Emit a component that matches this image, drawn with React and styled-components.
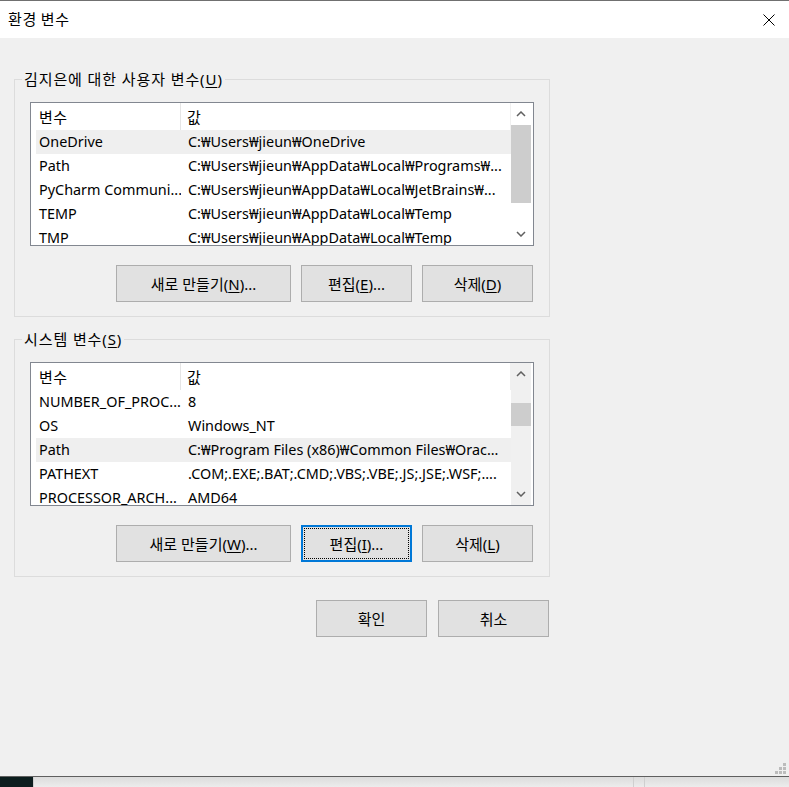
import React from "react";
import styled, { createGlobalStyle } from "styled-components";

//setup styled
const GlobalStyle = createGlobalStyle`
  html, body {
    margin: 0;
    padding: 0;
    background: #f0f0f0;
  }
  body {
    font-family: "Noto Sans", "Noto Sans CJK KR", sans-serif;
    font-size: 15px;
    color: #000000;
  }
`;

const Window = styled.div`
  width: 789px;
  height: 787px;
  display: flex;
  flex-direction: column;
  overflow: hidden;
`;

const TitleBar = styled.div`
  height: 38px;
  box-sizing: border-box;
  border-top: 1px solid #707070;
  background: #ffffff;
  display: flex;
  align-items: center;
  justify-content: space-between;
  padding: 0 14px 0 8px;
  flex-shrink: 0;
`;

const Title = styled.div`
  font-family: "Noto Sans CJK KR", sans-serif;
  font-size: 15px;
  line-height: 20px;
  letter-spacing: 0.6px;
  margin-top: -1px;
`;

const Body = styled.div`
  position: relative;
  height: 739px;
  box-sizing: border-box;
  border-bottom: 1px solid #5f5f5f;
  background: #f0f0f0;
  padding: 31px 0 0 14px;
  display: flex;
  flex-direction: column;
  align-items: flex-start;
`;

const Group = styled.fieldset`
  width: 536px;
  box-sizing: border-box;
  margin: ${props => (props.$first ? "0" : "12px 0 0 0")};
  padding: 13px 15px 14px 15px;
  border: 1px solid #dcdcdc;
  min-width: 0;
`;

const Legend = styled.legend`
  margin-left: -8px;
  padding: 0 2px;
  line-height: 20px;
  font-size: 15px;
  letter-spacing: 0.9px;
`;

const Key = styled.span`
  text-decoration: underline;
  text-underline-offset: 2px;
`;

const List = styled.div`
  height: 144px;
  box-sizing: border-box;
  border: 1px solid #828790;
  background: #ffffff;
  display: flex;
  padding-right: 1px;
  overflow: hidden;
`;

const ListBody = styled.div`
  width: 480px;
  display: flex;
  flex-direction: column;
  overflow: hidden;
`;

const HeaderRow = styled.div`
  height: 27px;
  flex-shrink: 0;
  display: flex;
  align-items: center;
  border-right: 1px solid #f0f0f0;
`;

const HeaderCell = styled.div`
  height: 100%;
  box-sizing: border-box;
  display: flex;
  align-items: center;
  width: ${props => props.$width || "auto"};
  flex: ${props => (props.$width ? "none" : "1")};
  padding-left: ${props => props.$pad};
  border-right: ${props => (props.$divider ? "1px solid #e5e5e5" : "none")};
  font-family: "Noto Sans CJK KR", sans-serif;
  letter-spacing: 0.5px;
`;

const Row = styled.div`
  height: 24px;
  flex-shrink: 0;
  margin-left: 5px;
  display: flex;
  align-items: center;
  background: ${props => (props.$active ? "#efefef" : "transparent")};
  white-space: nowrap;
`;

const Cell = styled.div`
  width: ${props => props.$width || "auto"};
  flex: ${props => (props.$width ? "none" : "1")};
  box-sizing: border-box;
  padding-left: ${props => props.$pad};
  overflow: hidden;
  font-size: 14.4px;
  line-height: 24px;
`;

const ScrollBar = styled.div`
  width: 20px;
  flex-shrink: 0;
  display: flex;
  flex-direction: column;
  background: ${props => props.$track};
`;

const Arrow = styled.div`
  height: ${props => props.$h}px;
  flex-shrink: 0;
  display: flex;
  align-items: center;
  justify-content: center;
`;

const Track = styled.div`
  flex: 1;
`;

const Thumb = styled.div`
  margin-top: ${props => props.$top}px;
  height: ${props => props.$size}px;
  background: #cdcdcd;
`;

const ButtonRow = styled.div`
  display: flex;
  justify-content: flex-end;
  gap: 10px;
  margin-top: 19px;
  padding-right: 1px;
`;

const Button = styled.div`
  width: ${props => props.$width || "111px"};
  height: 37px;
  box-sizing: border-box;
  background: #e1e1e1;
  border: ${props => (props.$focus ? "2px solid #0078d7" : "1px solid #adadad")};
  display: flex;
  align-items: center;
  justify-content: center;
  padding: ${props => (props.$focus ? "1px" : "2px")};
  font-size: 15px;
  line-height: 20px;
`;

const FocusRing = styled.div`
  width: 100%;
  height: 100%;
  box-sizing: border-box;
  border: 1px dotted #000000;
  display: flex;
  align-items: center;
  justify-content: center;
`;

const Footer = styled.div`
  width: 536px;
  display: flex;
  justify-content: flex-end;
  gap: 11px;
  margin-top: 23px;
  padding-right: 1px;
  box-sizing: border-box;
`;

const Grip = styled.svg`
  position: absolute;
  right: 2px;
  bottom: 1px;
`;

const Taskbar = styled.div`
  height: 10px;
  flex-shrink: 0;
  display: flex;
`;

const TaskDark = styled.div`
  width: 33px;
  background: #0c1d1e;
`;

const TaskPanel = styled.div`
  width: ${props => props.$width}px;
  box-sizing: border-box;
  border-left: 1px solid #cfcfcf;
  background: linear-gradient(#dcdcdc, #ececec);
  flex: ${props => (props.$grow ? "1" : "none")};
`;

const userRows = [
  ["OneDrive", "C:₩Users₩jieun₩OneDrive", true],
  ["Path", "C:₩Users₩jieun₩AppData₩Local₩Programs₩..."],
  ["PyCharm Communi...", "C:₩Users₩jieun₩AppData₩Local₩JetBrains₩..."],
  ["TEMP", "C:₩Users₩jieun₩AppData₩Local₩Temp"],
  ["TMP", "C:₩Users₩jieun₩AppData₩Local₩Temp"]
];

const systemRows = [
  ["NUMBER_OF_PROC...", "8"],
  ["OS", "Windows_NT"],
  ["Path", "C:₩Program Files (x86)₩Common Files₩Orac...", true],
  ["PATHEXT", ".COM;.EXE;.BAT;.CMD;.VBS;.VBE;.JS;.JSE;.WSF;...."],
  ["PROCESSOR_ARCH...", "AMD64"]
];

const Chevron = ({ down }) => (
  <svg width="10" height="6" viewBox="0 0 10 6">
    <path
      d={down ? "M1 1 L5 5 L9 1" : "M1 5 L5 1 L9 5"}
      fill="none"
      stroke="#606060"
      strokeWidth="1.5"
    />
  </svg>
);

const VarList = ({ rows, track, thumbTop, thumbSize }) => (
  <List>
    <ListBody>
      <HeaderRow>
        <HeaderCell $width="150px" $pad="8px" $divider>
          변수
        </HeaderCell>
        <HeaderCell $pad="6px">값</HeaderCell>
      </HeaderRow>
      {rows.map(([name, value, active]) => (
        <Row key={name + value} $active={active}>
          <Cell $width="145px" $pad="3px">
            {name}
          </Cell>
          <Cell $pad="7px">{value}</Cell>
        </Row>
      ))}
    </ListBody>
    <ScrollBar $track={track}>
      <Arrow $h={22}>
        <Chevron />
      </Arrow>
      <Track>
        <Thumb $top={thumbTop} $size={thumbSize} />
      </Track>
      <Arrow $h={22}>
        <Chevron down />
      </Arrow>
    </ScrollBar>
  </List>
);

// Main Function
export default function App() {
  return (
    <Window>
      <GlobalStyle />
      <TitleBar>
        <Title>환경 변수</Title>
        <svg width="12" height="12" viewBox="0 0 12 12">
          <path d="M0.5 0.5 L11.5 11.5 M11.5 0.5 L0.5 11.5" stroke="#000" strokeWidth="1" />
        </svg>
      </TitleBar>

      <Body>
        <Group $first>
          <Legend>
            김지은에 대한 사용자 변수(<Key>U</Key>)
          </Legend>
          <VarList rows={userRows} track="#ffffff" thumbTop={0} thumbSize={78} />
          <ButtonRow>
            <Button $width="175px">
              새로 만들기(<Key>N</Key>)...
            </Button>
            <Button>
              편집(<Key>E</Key>)...
            </Button>
            <Button>
              삭제(<Key>D</Key>)
            </Button>
          </ButtonRow>
        </Group>

        <Group>
          <Legend>
            시스템 변수(<Key>S</Key>)
          </Legend>
          <VarList rows={systemRows} track="#f0f0f0" thumbTop={18} thumbSize={23} />
          <ButtonRow>
            <Button $width="175px">
              새로 만들기(<Key>W</Key>)...
            </Button>
            <Button $focus>
              <FocusRing>
                편집(<Key>I</Key>)...
              </FocusRing>
            </Button>
            <Button>
              삭제(<Key>L</Key>)
            </Button>
          </ButtonRow>
        </Group>

        <Footer>
          <Button>확인</Button>
          <Button>취소</Button>
        </Footer>

        <Grip width="12" height="12" viewBox="0 0 12 12">
          <g fill="#bcbcbc">
            <rect x="8" y="0" width="3" height="3" />
            <rect x="4" y="4" width="3" height="3" />
            <rect x="8" y="4" width="3" height="3" />
            <rect x="0" y="8" width="3" height="3" />
            <rect x="4" y="8" width="3" height="3" />
            <rect x="8" y="8" width="3" height="3" />
          </g>
        </Grip>
      </Body>

      <Taskbar>
        <TaskDark />
        <TaskPanel $width={600} />
        <TaskPanel $width={11} />
        <TaskPanel $grow />
      </Taskbar>
    </Window>
  );
}
